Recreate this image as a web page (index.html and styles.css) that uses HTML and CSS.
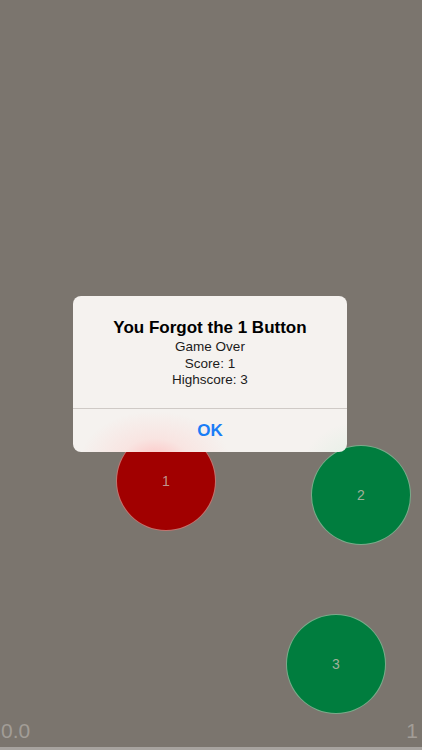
FILE: index.html
```html
<!DOCTYPE html>
<html lang="en">
<head>
    <meta charset="UTF-8">
    <meta name="viewport" content="width=device-width, initial-scale=1.0">
    <title>Buttons</title>
    <link rel="stylesheet" href="styles.css">
</head>
<body>
    <div class="stage">
        <div class="ball red" style="left: 116px; top: 431px;">1</div>
        <div class="ball green" style="left: 311px; top: 445px;">2</div>
        <div class="ball green" style="left: 286px; top: 614px;">3</div>

        <div class="hud">
            <span class="timer">0.0</span>
            <span class="level">1</span>
        </div>
        <div class="bar"></div>

        <!-- Game over alert -->
        <div class="alert">
            <div class="alert-body">
                <h2>You Forgot the 1 Button</h2>
                <p>Game Over</p>
                <p>Score: 1</p>
                <p>Highscore: 3</p>
            </div>
            <button class="alert-ok">OK</button>
        </div>
    </div>
</body>
</html>
```

FILE: styles.css
```css
body {
    margin: 0;
    padding: 0;
    font-family: "Liberation Sans", Arial, sans-serif;
}
.stage {
    position: relative;
    width: 422px;
    height: 750px;
    overflow: hidden;
    background-color: #7b756e;
    display: flex;
    flex-direction: column;
    justify-content: flex-end;
}
.ball {
    position: absolute;
    width: 100px;
    height: 100px;
    box-sizing: border-box;
    border-radius: 50%;
    border: 1px solid rgba(220, 210, 200, 0.55);
    display: flex;
    justify-content: center;
    align-items: center;
    font-size: 14px;
    color: rgba(200, 190, 180, 0.8);
}
.ball.red {
    background-color: #a10000;
}
.ball.green {
    background-color: #007d3e;
}
.hud {
    display: flex;
    justify-content: space-between;
    align-items: flex-end;
    padding: 0 4px 6px 1px;
    color: #a29d97;
    font-size: 21px;
    font-weight: 300;
    line-height: 21px;
}
.bar {
    height: 3px;
    background-color: #a7a39f;
}
.alert {
    position: absolute;
    left: 73px;
    top: 296px;
    width: 274px;
    height: 156px;
    border-radius: 8px;
    overflow: hidden;
    background:
        radial-gradient(ellipse 75px 50px at 82px 165px, rgba(255, 185, 185, 0.85) 0, rgba(252, 215, 212, 0.5) 45%, rgba(245, 241, 238, 0) 100%),
        radial-gradient(ellipse 60px 45px at 290px 170px, rgba(170, 225, 190, 0.75) 0, rgba(220, 238, 225, 0.4) 50%, rgba(245, 241, 238, 0) 100%),
        #f5f2ef;
    display: flex;
    flex-direction: column;
}
.alert-body {
    flex: 1;
    text-align: center;
    padding-top: 22px;
    color: #1b1b1b;
}
.alert-body h2 {
    margin: 0 0 2px;
    font-size: 17px;
    line-height: 19px;
    font-weight: bold;
    color: #000;
}
.alert-body p {
    margin: 0;
    font-size: 13.5px;
    line-height: 16.5px;
}
.alert-ok {
    height: 44px;
    border: none;
    border-top: 1px solid #cfcac6;
    background: transparent;
    font-family: inherit;
    font-size: 17px;
    font-weight: bold;
    color: #1a7df6;
    padding: 0;
}
```
